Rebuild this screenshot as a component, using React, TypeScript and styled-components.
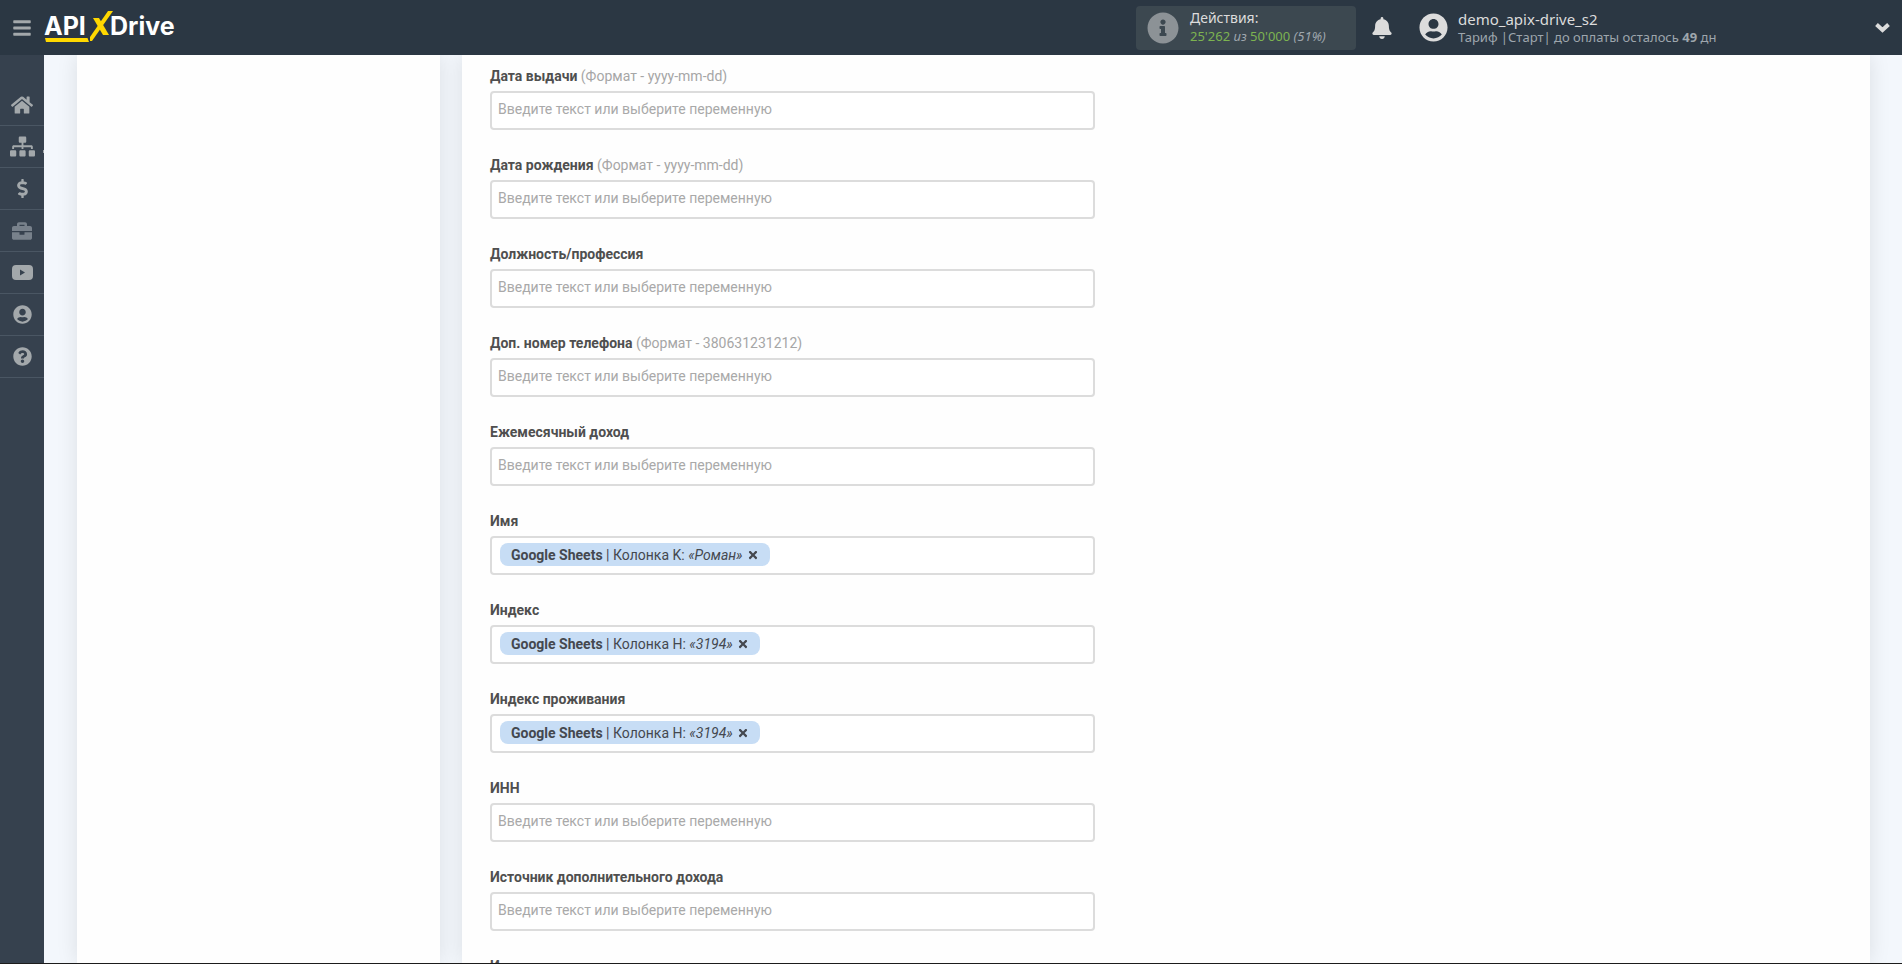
import React from "react";
import styled, { createGlobalStyle, css } from "styled-components";
import {
  FaBars,
  FaBell,
  FaBriefcase,
  FaDollarSign,
  FaHome,
  FaInfoCircle,
  FaQuestionCircle,
  FaSitemap,
  FaTimes,
  FaUserCircle,
} from "react-icons/fa";

const GlobalStyle = createGlobalStyle`
  *, *::before, *::after { box-sizing: border-box; }
  body {
    margin: 0;
    background: #f3f7fc;
    font-family: Roboto, "Liberation Sans", sans-serif;
    font-size: 14px;
    color: #4f4f4f;
  }
  button { padding: 0; border: 0; background: none; color: inherit; font: inherit; cursor: pointer; }
  a { color: inherit; text-decoration: none; }
`;

const Page = styled.div`
  display: grid;
  grid-template: 55px minmax(0, 1fr) / 44px minmax(0, 1fr);
  height: 100vh;
  overflow: hidden;
  border-bottom: 1px solid #1c1c1c;
`;

const Header = styled.header`
  grid-column: 1 / -1;
  display: flex;
  align-items: center;
  background: #2b3743;
  color: #dcdcdc;
  font-family: "Noto Sans", "Open Sans", sans-serif;
`;

const MenuButton = styled.button`
  display: flex;
  justify-content: center;
  width: 44px;
  color: #a3a8ab;
`;

const Logo = styled.a`
  display: flex;
  color: #fff;
`;

const LogoArt = styled.svg`
  display: block;
  width: 140px;
  height: 55px;
  font: 700 25px Inter, sans-serif;
`;

const HeaderRight = styled.div`
  display: flex;
  align-items: center;
  margin-left: auto;
`;

const Usage = styled.section`
  display: flex;
  align-items: center;
  gap: 11px;
  width: 220px;
  height: 44px;
  padding-left: 11px;
  border-radius: 4px;
  background: #3c4850;

  svg { color: #8c9296; }
`;

const TextBlock = styled.div<{ $raised?: boolean }>`
  display: flex;
  flex-direction: column;
  padding-bottom: ${(p) => (p.$raised ? "2px" : "0")};
  white-space: nowrap;
`;

const TitleLine = styled.span<{ $size: number }>`
  font-size: ${(p) => p.$size}px;
  line-height: 18px;
`;

const DetailLine = styled.span`
  font-size: 13px;
  line-height: 18px;
  color: #9ea6ad;
`;

const Count = styled.span`
  color: #7cb350;
`;

const BellButton = styled.button`
  display: flex;
  justify-content: center;
  width: 52px;
`;

const Account = styled.button`
  display: flex;
  align-items: center;
  gap: 10px;
  width: 483px;
  margin-left: 11px;
  padding-right: 12px;
  text-align: left;

  & > svg:last-child { margin-left: auto; }
`;

const Sidebar = styled.nav`
  padding-top: 29px;
  background: #36414e;
`;

const SideLink = styled.a<{ $dim?: boolean }>`
  display: flex;
  align-items: center;
  justify-content: center;
  height: 42px;
  border-bottom: 1px solid #4a5663;
  color: ${(p) => (p.$dim ? "#78818b" : "#a3a8ab")};
`;

const SideLinkMarked = styled(SideLink)`
  background: linear-gradient(#a3a8ab, #a3a8ab) right 24px / 1px 3px no-repeat;
`;

const Content = styled.main`
  display: grid;
  grid-template-columns: 363px minmax(0, 1fr);
  gap: 22px;
  padding: 0 32px 0 33px;
  overflow: hidden;
`;

const panel = css`
  background: #fefefe;
  box-shadow: 0 0 20px rgba(0, 0, 0, 0.1);
`;

const StepsPanel = styled.aside`
  ${panel}
`;

const FormPanel = styled.form`
  ${panel}
  display: flex;
  flex-direction: column;
  gap: 25px;
  min-height: 0;
  padding: 11px 28px 0;
  overflow: hidden;
`;

const Field = styled.div`
  display: flex;
  flex: none;
  flex-direction: column;
  gap: 5px;
  width: 605px;
  max-width: 100%;
`;

const Label = styled.label`
  line-height: 20px;
  font-weight: 700;
`;

const Hint = styled.span`
  font-weight: 400;
  color: #a6a6a6;
`;

const Box = styled.div`
  display: flex;
  height: 39px;
  padding: 5px 6px 7px;
  border: 2px solid #dcdcdc;
  border-radius: 4px;
  background: #fff;
`;

const TextInput = styled.input`
  flex: 1;
  min-width: 0;
  padding: 0 0 2px;
  border: 0;
  outline: 0;
  background: none;
  font: inherit;
  line-height: 20px;

  &::placeholder { color: #a9a9a9; opacity: 1; }
`;

const Tag = styled.span`
  display: flex;
  flex: none;
  align-items: center;
  gap: 4px;
  height: 23px;
  margin-left: 2px;
  padding: 0 11px;
  border-radius: 8px;
  background: #c7ddf5;
  color: #44484f;
  white-space: nowrap;
`;

const TagRemove = styled.button`
  display: flex;
`;

type Variable = { column: string; value: string };
type FieldData = { label: string; hint?: string; variable?: Variable };

const FIELDS: FieldData[] = [
  { label: "Дата выдачи", hint: "(Формат - yyyy-mm-dd)" },
  { label: "Дата рождения", hint: "(Формат - yyyy-mm-dd)" },
  { label: "Должность/профессия" },
  { label: "Доп. номер телефона", hint: "(Формат - 380631231212)" },
  { label: "Ежемесячный доход" },
  { label: "Имя", variable: { column: "K", value: "Роман" } },
  { label: "Индекс", variable: { column: "H", value: "3194" } },
  { label: "Индекс проживания", variable: { column: "H", value: "3194" } },
  { label: "ИНН" },
  { label: "Источник дополнительного дохода" },
  { label: "Источник дохода" },
];

function FormField({ id, label, hint, variable }: FieldData & { id: string }) {
  return (
    <Field>
      <Label htmlFor={id}>
        {label} {hint && <Hint>{hint}</Hint>}
      </Label>
      <Box>
        {variable && (
          <Tag>
            <span>
              <b>Google Sheets</b> | Колонка {variable.column}: <i>«{variable.value}»</i>
            </span>
            <TagRemove type="button" aria-label="Удалить переменную">
              <FaTimes size={12} />
            </TagRemove>
          </Tag>
        )}
        <TextInput id={id} placeholder={variable ? undefined : "Введите текст или выберите переменную"} />
      </Box>
    </Field>
  );
}

function VideoIcon() {
  return (
    <svg width="21" height="15" viewBox="0 0 21 15" fill="currentColor" fillRule="evenodd" aria-hidden="true">
      <path d="M4 0h13a4 4 0 0 1 4 4v7a4 4 0 0 1-4 4H4a4 4 0 0 1-4-4V4a4 4 0 0 1 4-4zM8 4.500v6l5-3z" />
    </svg>
  );
}

function ChevronIcon() {
  return (
    <svg width="15" height="10" viewBox="0 0 15 10" fill="none" stroke="currentColor" strokeWidth="4" aria-hidden="true">
      <path d="M1.500 1.500l6 5.500 6-5.500" />
    </svg>
  );
}

export default function App() {
  return (
    <Page>
      <GlobalStyle />
      <Header>
        <MenuButton type="button" aria-label="Меню">
          <FaBars size={20} />
        </MenuButton>
        <Logo href="#" aria-label="APIXDrive">
          <LogoArt viewBox="0 0 140 55">
            <text x="0" y="35" fill="#fff">API</text>
            <text x="66" y="35" fill="#fff">Drive</text>
            <path d="M64 11h5L48 41h-2v-4z" fill="#ffd800" />
            <path d="M49 18h6l10 17h-6z" fill="#ffd800" />
            <path d="M1 38h42.500l1.500 4H2z" fill="#ffd800" />
          </LogoArt>
        </Logo>
        <HeaderRight>
          <Usage>
            <FaInfoCircle size={32} />
            <TextBlock $raised>
              <TitleLine $size={14}>Действия:</TitleLine>
              <DetailLine>
                <Count>25'262</Count> <i>из</i> <Count>50'000</Count> <i>(51%)</i>
              </DetailLine>
            </TextBlock>
          </Usage>
          <BellButton type="button" aria-label="Уведомления">
            <FaBell size={22} />
          </BellButton>
          <Account type="button">
            <FaUserCircle size={29} />
            <TextBlock>
              <TitleLine $size={15}>demo_apix-drive_s2</TitleLine>
              <DetailLine>
                Тариф |Старт| до оплаты осталось <b>49</b> дн
              </DetailLine>
            </TextBlock>
            <ChevronIcon />
          </Account>
        </HeaderRight>
      </Header>
      <Sidebar>
        <SideLink href="#" aria-label="Главная"><FaHome size={22} /></SideLink>
        <SideLinkMarked href="#" aria-label="Связи"><FaSitemap size={25} /></SideLinkMarked>
        <SideLink href="#" aria-label="Оплата"><FaDollarSign size={19} /></SideLink>
        <SideLink href="#" aria-label="Проекты" $dim><FaBriefcase size={20} /></SideLink>
        <SideLink href="#" aria-label="Видео"><VideoIcon /></SideLink>
        <SideLink href="#" aria-label="Профиль"><FaUserCircle size={19} /></SideLink>
        <SideLink href="#" aria-label="Помощь"><FaQuestionCircle size={19} /></SideLink>
      </Sidebar>
      <Content>
        <StepsPanel />
        <FormPanel>
          {FIELDS.map((field, i) => (
            <FormField key={field.label} id={`field-${i}`} {...field} />
          ))}
        </FormPanel>
      </Content>
    </Page>
  );
}
